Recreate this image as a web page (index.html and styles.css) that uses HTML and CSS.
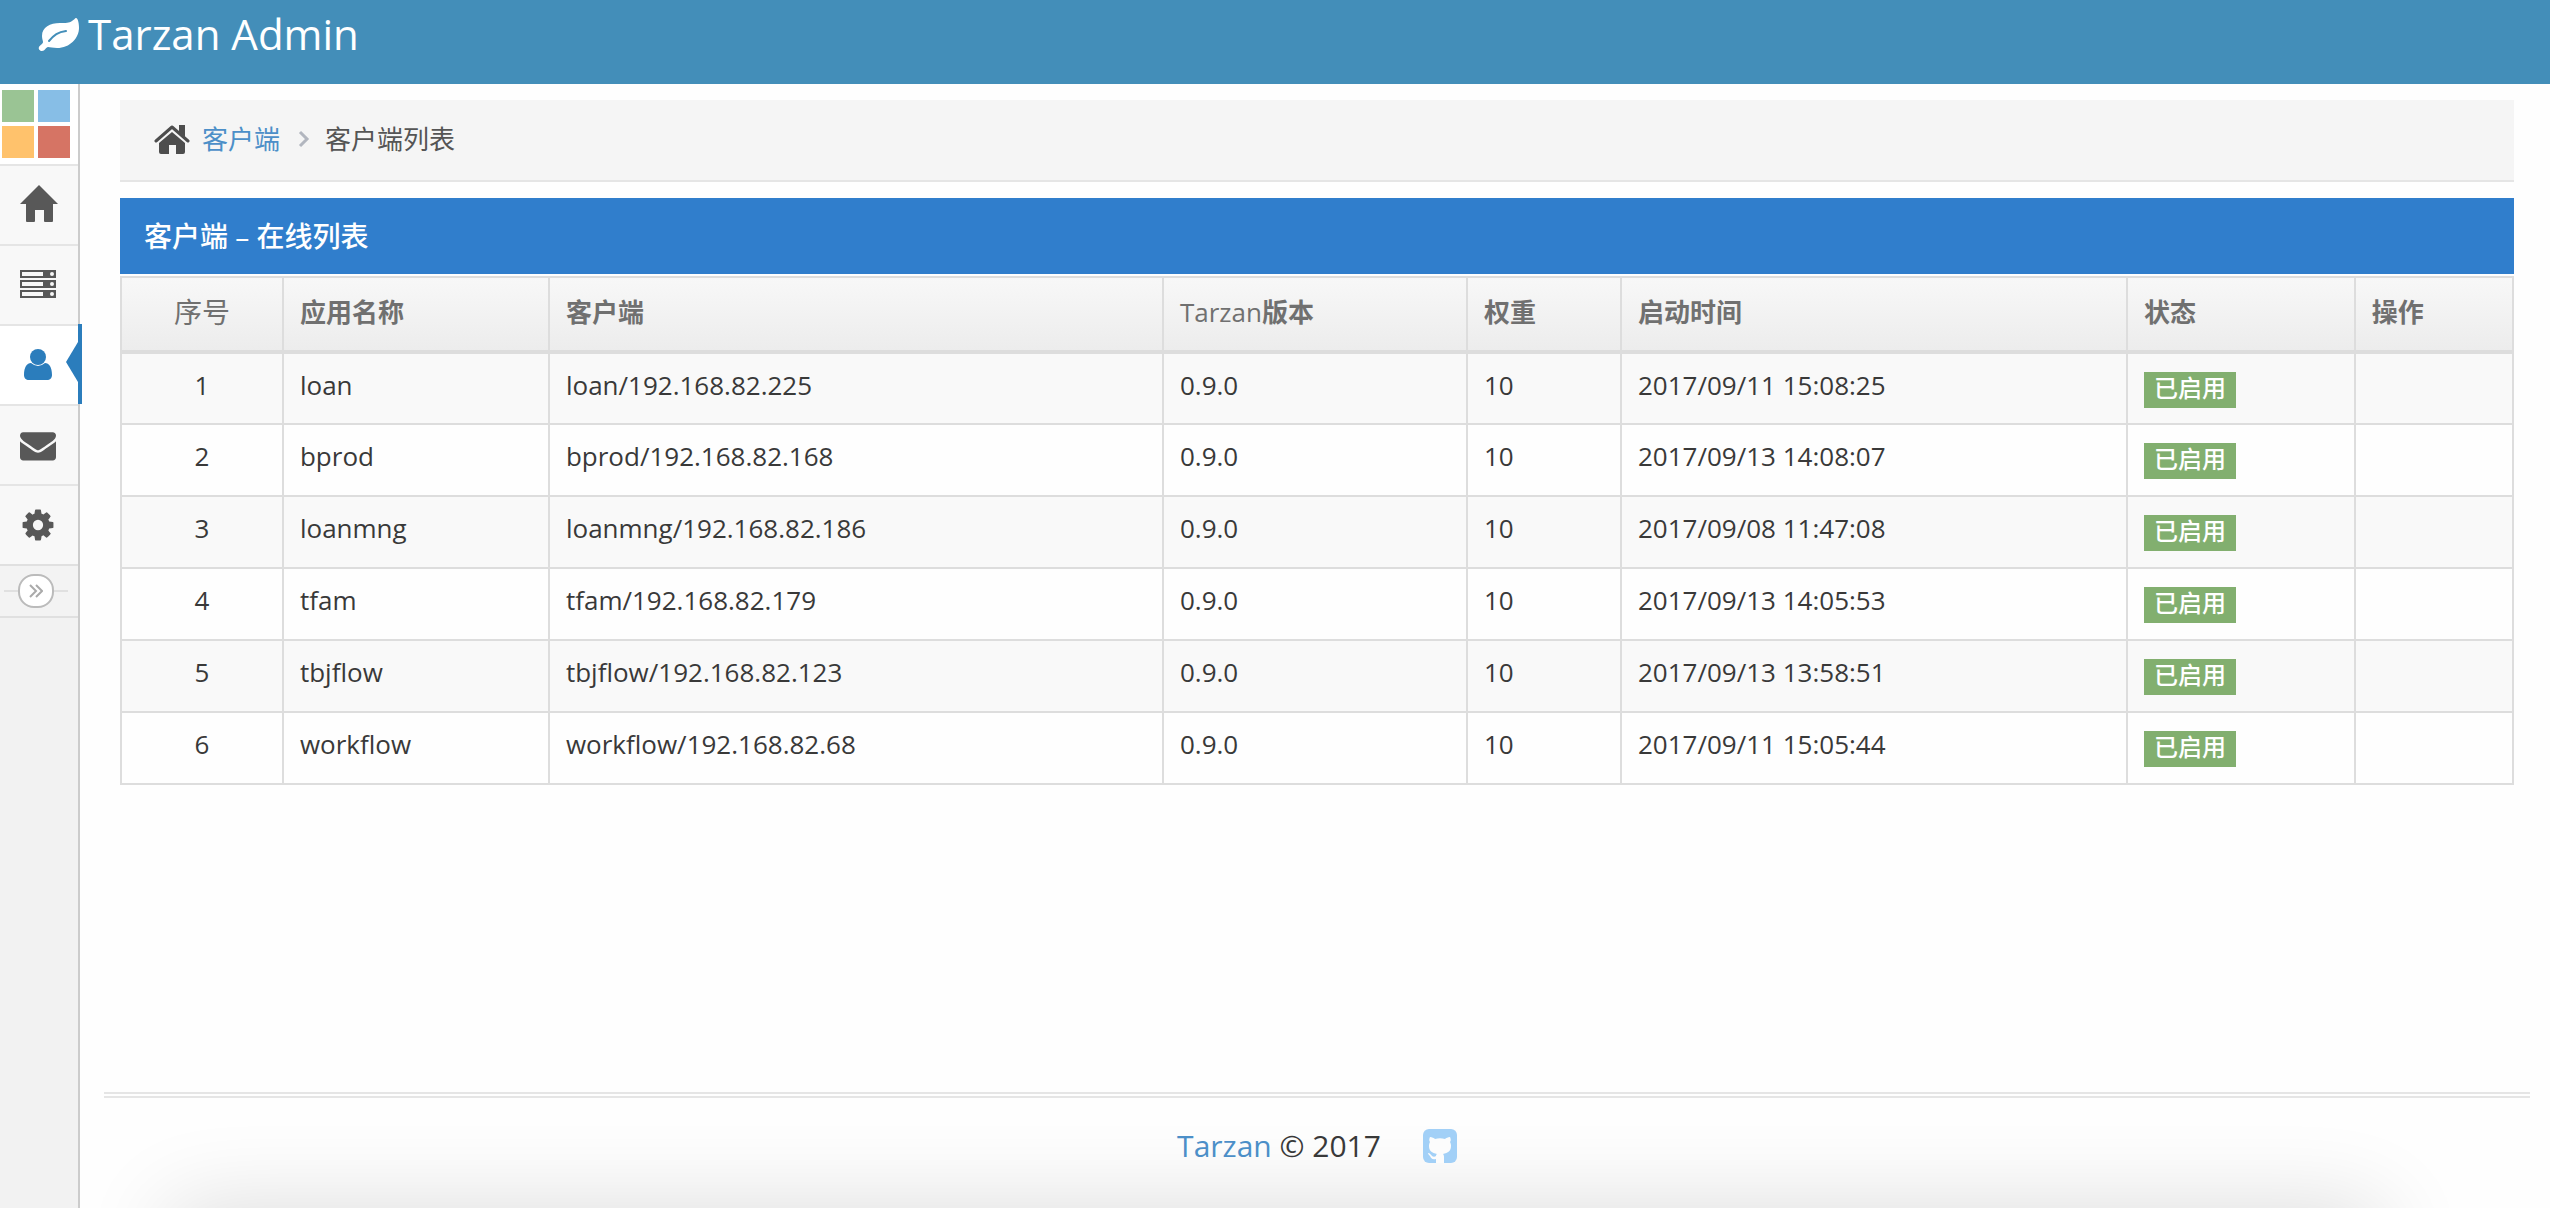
FILE: index.html
```html
<!DOCTYPE html>
<html lang="zh-CN">
<head>
    <meta charset="UTF-8">
    <meta name="viewport" content="width=device-width, initial-scale=1.0">
    <title>Tarzan Admin</title>
    <link rel="stylesheet" href="styles.css">
</head>
<body>
    <!-- Navbar -->
    <header class="navbar">
        <a class="brand" href="#">
            <svg class="brand-icon" viewBox="0 0 42 34" aria-hidden="true">
                <path fill="#fff" d="M38 1c2 0 3 6 3 10 0 10-9 20-22 20-4 0-7-1-9-1-2 0-3 4-6 4-2 0-4-2-3-4 1-2 4-3 4-5 0-1-1-3-1-6C4 10 12 6 22 6c6 0 9 0 12-2 2-1 3-3 4-3z"/>
                <path fill="none" stroke="#438eb9" stroke-width="2" stroke-linecap="round" d="M11 24c5-6 9-9 17-10"/>
            </svg>
            <span>Tarzan Admin</span>
        </a>
    </header>

    <div class="main-container">
        <!-- Sidebar -->
        <nav class="sidebar">
            <div class="shortcuts">
                <span class="shortcut green"></span>
                <span class="shortcut blue"></span>
                <span class="shortcut orange"></span>
                <span class="shortcut red"></span>
            </div>
            <a class="nav-item" href="#" aria-label="首页">
                <svg class="nav-icon nav-icon-home" viewBox="0 0 38 38" aria-hidden="true">
                    <path d="M19 0 38 19H33V36q0 1-1 1H25q-1 0-1-1V25H15V36q0 1-1 1H7q-1 0-1-1V19H0z"/>
                </svg>
            </a>
            <a class="nav-item" href="#" aria-label="应用">
                <svg class="nav-icon" viewBox="0 0 36 36" aria-hidden="true">
                    <path fill-rule="evenodd" d="M0 3h36v8H0zM2 5v4h21V5zM32 5a2 2 0 1 0 0 4 2 2 0 0 0 0-4zM0 13h36v8H0zM2 15v4h21v-4zM32 15a2 2 0 1 0 0 4 2 2 0 0 0 0-4zM0 23h36v8H0zM2 25v4h21v-4zM32 25a2 2 0 1 0 0 4 2 2 0 0 0 0-4z"/>
                </svg>
            </a>
            <a class="nav-item active" href="#" aria-label="客户端">
                <svg class="nav-icon" viewBox="0 0 36 36" aria-hidden="true">
                    <circle cx="18" cy="10" r="8"/>
                    <path d="M11 16q7 6 14 0c4 0 7 4 7 12 0 3-2 5-5 5H9c-3 0-5-2-5-5 0-8 3-12 7-12z"/>
                </svg>
            </a>
            <a class="nav-item" href="#" aria-label="消息">
                <svg class="nav-icon" viewBox="0 0 1792 1792" aria-hidden="true">
                    <path d="M1792 710v794q0 66-47 113t-113 47h-1472q-66 0-113-47t-47-113v-794q44 49 101 87 362 246 497 345 57 42 92.500 65.500t94.500 48 110 24.500h2q51 0 110-24.500t94.500-48 92.500-65.500q170-123 498-345 57-39 100-87zM1792 418q0 79-49 151t-122 123q-376 261-468 325-10 7-42.500 31t-54 38.500-52 32.500-57.500 27-50 9h-2q-23 0-50-9t-57.500-27-52-32.500-54-38.500-42.500-31q-91-64-262-182.500t-205-142.500q-62-42-117-115.500t-55-136.500q0-78 41.500-130t118.500-52h1472q65 0 112.500 47t47.500 113z"/>
                </svg>
            </a>
            <a class="nav-item" href="#" aria-label="设置">
                <svg class="nav-icon" viewBox="0 0 1792 1792" aria-hidden="true">
                    <path d="M1152 896q0-106-75-181t-181-75-181 75-75 181 75 181 181 75 181-75 75-181zm512-109v222q0 12-8 23t-20 13l-185 28q-19 54-39 91 35 50 107 138 10 12 10 25t-9 23q-27 37-99 108t-94 71q-12 0-26-9l-138-108q-44 23-91 38-16 136-29 186-7 28-36 28h-222q-14 0-24.500-8.500t-11.500-21.500l-28-184q-49-16-90-37l-141 107q-10 9-25 9-14 0-25-11-126-114-165-168-7-10-7-23 0-12 8-23 15-21 51-66.500t54-70.500q-27-50-41-99l-183-27q-13-2-21-12.500t-8-23.500v-222q0-12 8-23t19-13l186-28q14-46 39-92-40-57-107-138-10-12-10-24 0-10 9-23 26-36 98.500-107.500t94.500-71.500q13 0 26 10l138 107q44-23 91-38 16-136 29-186 7-28 36-28h222q14 0 24.500 8.500t11.500 21.500l28 184q49 16 90 37l142-107q9-9 24-9 13 0 25 10 129 119 165 170 7 8 7 22 0 12-8 23-15 21-51 66.500t-54 70.500q26 50 41 98l183 28q13 2 21 12.500t8 23.500z"/>
                </svg>
            </a>
            <div class="sidebar-toggle">
                <button class="toggle-button" type="button" aria-label="展开菜单">
                    <svg class="toggle-icon" viewBox="0 0 14 16" aria-hidden="true">
                        <path d="M1 2l6 6-6 6M7 2l6 6-6 6"/>
                    </svg>
                </button>
            </div>
        </nav>

        <!-- Page content -->
        <main class="content">
            <div class="page">
                <div class="breadcrumb">
                    <svg class="breadcrumb-home" viewBox="0 0 36 29" aria-hidden="true">
                        <path fill="none" stroke="#4d4d4d" stroke-width="3" stroke-linecap="round" stroke-linejoin="round" d="M2 16 18 2l16 14"/>
                        <path fill="#4d4d4d" d="M25 0h6v12l-6-5zM18 7l13 11v9q0 2-2 2h-7v-9h-7v9H7q-2 0-2-2v-9z"/>
                    </svg>
                    <a class="breadcrumb-link" href="#">客户端</a>
                    <svg class="breadcrumb-arrow" viewBox="0 0 12 18" aria-hidden="true">
                        <path d="M2 2l7 7-7 7"/>
                    </svg>
                    <span>客户端列表</span>
                </div>

                <h1 class="table-header">客户端 – 在线列表</h1>

                <table class="table">
                    <colgroup>
                        <col class="col-index">
                        <col class="col-app">
                        <col class="col-client">
                        <col class="col-version">
                        <col class="col-weight">
                        <col class="col-time">
                        <col class="col-status">
                        <col class="col-action">
                    </colgroup>
                    <thead>
                        <tr>
                            <th class="index">序号</th>
                            <th>应用名称</th>
                            <th>客户端</th>
                            <th><span class="latin">Tarzan</span>版本</th>
                            <th>权重</th>
                            <th>启动时间</th>
                            <th>状态</th>
                            <th>操作</th>
                        </tr>
                    </thead>
                    <tbody>
                        <tr>
                            <td class="index">1</td>
                            <td>loan</td>
                            <td>loan/192.168.82.225</td>
                            <td>0.9.0</td>
                            <td>10</td>
                            <td>2017/09/11 15:08:25</td>
                            <td><span class="label">已启用</span></td>
                            <td></td>
                        </tr>
                        <tr>
                            <td class="index">2</td>
                            <td>bprod</td>
                            <td>bprod/192.168.82.168</td>
                            <td>0.9.0</td>
                            <td>10</td>
                            <td>2017/09/13 14:08:07</td>
                            <td><span class="label">已启用</span></td>
                            <td></td>
                        </tr>
                        <tr>
                            <td class="index">3</td>
                            <td>loanmng</td>
                            <td>loanmng/192.168.82.186</td>
                            <td>0.9.0</td>
                            <td>10</td>
                            <td>2017/09/08 11:47:08</td>
                            <td><span class="label">已启用</span></td>
                            <td></td>
                        </tr>
                        <tr>
                            <td class="index">4</td>
                            <td>tfam</td>
                            <td>tfam/192.168.82.179</td>
                            <td>0.9.0</td>
                            <td>10</td>
                            <td>2017/09/13 14:05:53</td>
                            <td><span class="label">已启用</span></td>
                            <td></td>
                        </tr>
                        <tr>
                            <td class="index">5</td>
                            <td>tbjflow</td>
                            <td>tbjflow/192.168.82.123</td>
                            <td>0.9.0</td>
                            <td>10</td>
                            <td>2017/09/13 13:58:51</td>
                            <td><span class="label">已启用</span></td>
                            <td></td>
                        </tr>
                        <tr>
                            <td class="index">6</td>
                            <td>workflow</td>
                            <td>workflow/192.168.82.68</td>
                            <td>0.9.0</td>
                            <td>10</td>
                            <td>2017/09/11 15:05:44</td>
                            <td><span class="label">已启用</span></td>
                            <td></td>
                        </tr>
                    </tbody>
                </table>
            </div>

            <!-- Footer -->
            <footer class="footer">
                <p class="copyright"><a href="#">Tarzan</a> © 2017</p>
                <a class="github" href="#" aria-label="GitHub">
                    <svg class="github-icon" viewBox="0 0 34 34" aria-hidden="true">
                        <rect width="34" height="34" rx="6" fill="#a2d0f7"/>
                        <path fill="#fcfcfc" d="M7 8c2 0 4 1 5 2 3-1 7-1 10 0 1-1 3-2 5-2 1 2 1 4 0 5 1 2 1 3 1 4 0 5-3 7-8 8 1 1 1 2 1 4v5h-8v-4c-4 1-5-1-6-3-1-1-2-2-2-3 2 0 3 2 4 3 1 1 3 1 4 0 0-1 0-1 1-2-5-1-8-3-8-8 0-1 0-2 1-4-1-1-1-3 0-5z"/>
                    </svg>
                </a>
            </footer>
        </main>
    </div>
</body>
</html>
```
FILE: styles.css
```css
* {
    box-sizing: border-box;
}

body {
    margin: 0;
    min-height: 100vh;
    display: flex;
    flex-direction: column;
    background: #fefefe;
    color: #393939;
    font-family: "Open Sans", "Noto Sans CJK SC", sans-serif;
    font-size: 26px;
    line-height: 36px;
}

a {
    color: #4c8fc8;
    text-decoration: none;
}

svg {
    display: block;
}

/* Navbar */
.navbar {
    height: 84px;
    padding: 4px 38px;
    background: #438eb9;
}

.brand {
    display: inline-flex;
    align-items: center;
    gap: 8px;
    color: #fff;
    font-size: 42px;
    line-height: 60px;
}

.brand-icon {
    width: 42px;
    height: 34px;
}

.main-container {
    flex: 1;
    display: flex;
}

/* Sidebar */
.sidebar {
    width: 80px;
    flex-shrink: 0;
    background: #f2f2f2;
    border-right: 2px solid #ccc;
}

.shortcuts {
    display: grid;
    grid-template-columns: 32px 32px;
    grid-auto-rows: 32px;
    gap: 4px;
    padding: 6px 2px;
    background: #fff;
}

.green {
    background: #9ac494;
}

.blue {
    background: #87bee6;
}

.orange {
    background: #ffc26c;
}

.red {
    background: #d67464;
}

.nav-item {
    position: relative;
    display: flex;
    align-items: center;
    justify-content: center;
    height: 80px;
    padding-right: 2px;
    border-top: 2px solid #e5e5e5;
    background: #f8f8f8;
    color: #585858;
}

.nav-icon {
    width: 36px;
    height: 36px;
    fill: currentColor;
}

.nav-icon-home {
    width: 38px;
    height: 38px;
    margin: 0 0 2px 2px;
}

.nav-item.active {
    background: #fff;
    color: #2b7dbc;
}

/* Blue bar and arrow over the sidebar edge */
.nav-item.active::before {
    content: "";
    position: absolute;
    top: -2px;
    right: -4px;
    width: 4px;
    height: 80px;
    background: #2b7dbc;
}

.nav-item.active::after {
    content: "";
    position: absolute;
    top: 16px;
    right: 0;
    border: 20px solid transparent;
    border-right: 12px solid #2b7dbc;
    border-left: 0;
}

.sidebar-toggle {
    display: flex;
    align-items: center;
    height: 54px;
    padding: 0 10px 0 4px;
    border-top: 2px solid #e0e0e0;
    border-bottom: 2px solid #e0e0e0;
    background: #f3f3f3;
}

.sidebar-toggle::before,
.sidebar-toggle::after {
    content: "";
    flex: 1;
    height: 2px;
    background: #e0e0e0;
}

.toggle-button {
    display: flex;
    align-items: center;
    justify-content: center;
    width: 36px;
    height: 34px;
    padding: 0;
    border: 2px solid #bbb;
    border-radius: 16px;
    background: #fff;
    cursor: pointer;
}

.toggle-icon {
    width: 14px;
    height: 16px;
    fill: none;
    stroke: #aaa;
    stroke-width: 2px;
}

/* Content */
.content {
    position: relative;
    flex: 1;
    display: flex;
    flex-direction: column;
    overflow: hidden;
}

.page {
    padding: 16px 36px 0 40px;
}

.breadcrumb {
    display: flex;
    align-items: center;
    height: 82px;
    padding: 0 34px 2px;
    border-bottom: 2px solid #e5e5e5;
    background: #f5f5f5;
    color: #555;
}

.breadcrumb-home {
    width: 36px;
    height: 29px;
    margin-right: 12px;
}

.breadcrumb-arrow {
    width: 12px;
    height: 18px;
    margin: 0 15px 0 18px;
    fill: none;
    stroke: #b2b6bf;
    stroke-width: 3px;
}

.table-header {
    margin: 16px 0 2px;
    padding: 0 24px;
    background: #307ecc;
    color: #fff;
    font-size: 28px;
    font-weight: 500;
    line-height: 76px;
}

/* Table */
.table {
    width: 100%;
    table-layout: fixed;
    border-collapse: collapse;
}

.col-index {
    width: 6.77%;
}

.col-app {
    width: 11.12%;
}

.col-client {
    width: 25.67%;
}

.col-version {
    width: 12.71%;
}

.col-weight {
    width: 6.44%;
}

.col-time {
    width: 21.15%;
}

.col-status {
    width: 9.53%;
}

.col-action {
    width: 6.61%;
}

.table th,
.table td {
    height: 72px;
    padding: 13px 16px 12px;
    border: 2px solid #ddd;
    text-align: left;
    vertical-align: top;
}

.table thead tr {
    background: linear-gradient(#f8f8f8, #ececec);
    color: #707070;
}

.table th {
    height: 75px;
    padding-top: 16px;
    border-bottom-width: 4px;
    font-weight: bold;
}

.table tbody tr:nth-child(odd) {
    background: #f9f9f9;
}

.table .index {
    text-align: center;
}

.table th.index {
    font-size: 28px;
    font-weight: normal;
}

.latin {
    font-weight: 500;
}

.label {
    display: block;
    width: max-content;
    margin-top: 5px;
    padding: 0 10px 4px;
    background: #82af6f;
    color: #fff;
    font-size: 24px;
    font-weight: 500;
    line-height: 32px;
}

/* Footer */
.footer {
    display: flex;
    justify-content: center;
    align-items: center;
    gap: 42px;
    margin: auto 20px 0 24px;
    padding: 24px 0 38px;
    border-top: 6px double #e5e5e5;
    font-size: 30px;
    line-height: 48px;
}

.copyright {
    margin: 0;
}

.copyright,
.github {
    z-index: 1;
}

.github-icon {
    width: 34px;
    height: 34px;
}

/* Soft shadow rising from the bottom edge */
.content::after {
    content: "";
    position: absolute;
    top: 100%;
    left: 90px;
    right: 170px;
    height: 100px;
    box-shadow: 0 0 90px rgba(0, 0, 0, 0.14);
}
```
